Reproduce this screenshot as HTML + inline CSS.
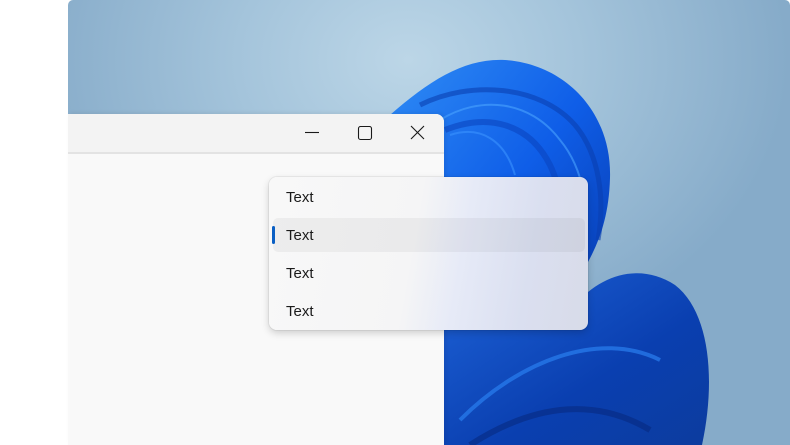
<!DOCTYPE html>
<html><head><style>
html,body{margin:0;padding:0;width:790px;height:445px;overflow:hidden;background:#fff;font-family:"Segoe UI","Liberation Sans",sans-serif}
.wall{position:absolute;left:68px;top:0;width:722px;height:445px;border-radius:5px 5px 0 0;overflow:hidden;
background:radial-gradient(ellipse 380px 300px at 340px 60px,#bcd6e7 0%,#a4c4db 45%,#86abc9 100%)}
.win{position:absolute;left:68px;top:114px;width:376px;height:331px;background:#f9f9f9;border-radius:0 8px 0 0;overflow:hidden;box-shadow:2px -1px 4px rgba(0,0,0,.08)}
.tb{height:38px;background:#f3f3f3;border-bottom:2px solid #e3e3e3}
.menu{position:absolute;left:269px;top:177px;width:319px;height:153px;border-radius:8px;
background:linear-gradient(100deg,#f8f8f8 0%,#f5f5f6 45%,#e6eaf7 60%,#dadff0 80%,#d8dbe8 100%);
box-shadow:0 3px 8px rgba(0,0,0,.18),0 0 0 1px rgba(0,0,0,.05)}
.it{position:absolute;left:17px;font-size:15px;color:#1b1b1b}
.hl{position:absolute;left:4px;top:41px;width:312px;height:34px;border-radius:5px;background:rgba(0,0,0,.045)}
.ind{position:absolute;left:3px;top:49px;width:3px;height:18px;border-radius:2px;background:#0a5fc4}
</style></head><body>
<div class="wall">
<svg width="722" height="445" viewBox="68 0 722 445" style="position:absolute;left:0;top:0">
<defs>
<linearGradient id="g1" x1="0" y1="0" x2="1" y2="1"><stop offset="0" stop-color="#2f8cf5"/><stop offset=".5" stop-color="#0f5ee8"/><stop offset="1" stop-color="#0636a8"/></linearGradient>
<linearGradient id="g2" x1="0" y1="0" x2="1" y2="1"><stop offset="0" stop-color="#1e63d8"/><stop offset=".6" stop-color="#0a3fb0"/><stop offset="1" stop-color="#0c3c9e"/></linearGradient>
</defs>
<path d="M390,115 C430,80 465,58 505,60 C565,64 612,112 610,178 C609,215 600,240 588,262 L444,340 L390,340 Z" fill="url(#g1)"/>
<path d="M420,105 C470,80 540,85 575,125 C600,155 605,200 598,240" stroke="#0a3fb0" stroke-width="5" fill="none" opacity=".6"/>
<path d="M440,120 C480,95 530,100 560,140 C585,170 590,215 585,250" stroke="#4aa3ff" stroke-width="2" fill="none" opacity=".6"/>
<path d="M445,130 C490,112 530,125 550,165 C562,190 565,220 560,250" stroke="#0a45c0" stroke-width="6" fill="none" opacity=".6"/>
<path d="M450,135 C480,125 505,140 515,175" stroke="#3b93ff" stroke-width="2" fill="none" opacity=".6"/>
<path d="M575,305 C600,275 640,262 675,285 C710,312 716,380 702,445 L444,445 L444,330 Z" fill="url(#g2)"/>
<path d="M460,420 C520,360 600,330 660,360" stroke="#2a7ff0" stroke-width="4" fill="none" opacity=".7"/>
<path d="M470,445 C540,400 600,400 650,430" stroke="#062a80" stroke-width="6" fill="none" opacity=".6"/>
</svg>
</div>
<div class="win"><div class="tb"></div>
<svg width="376" height="40" style="position:absolute;left:0;top:0" fill="none" stroke="#1a1a1a" stroke-width="1.1">
<path d="M237,18.5 H251"/>
<rect x="290.5" y="12.5" width="13" height="13" rx="2"/>
<path d="M343,12 L356,25 M356,12 L343,25"/>
</svg>
</div>
<div class="menu">
<div class="hl"></div><div class="ind"></div>
<div class="it" style="top:12px">Text</div>
<div class="it" style="top:50px">Text</div>
<div class="it" style="top:88px">Text</div>
<div class="it" style="top:126px">Text</div>
</div>
</body></html>
